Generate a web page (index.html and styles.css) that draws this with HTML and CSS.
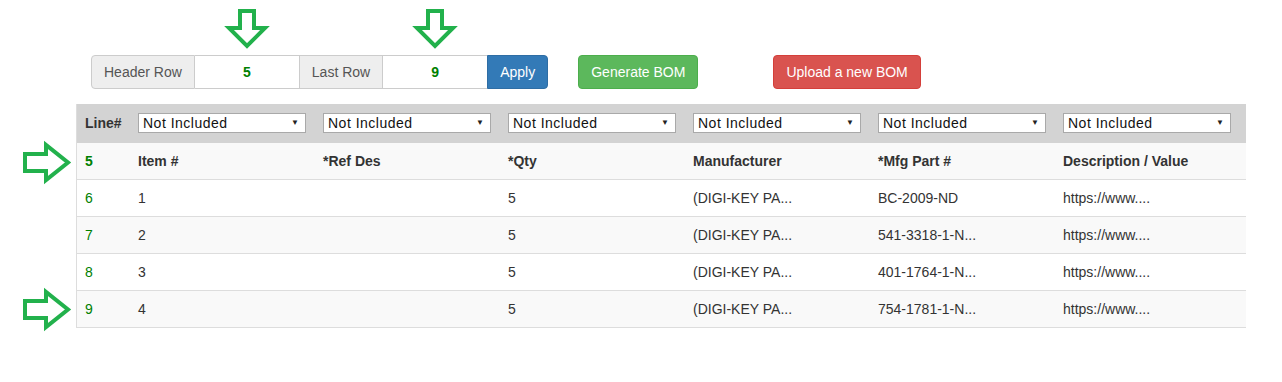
FILE: index.html
```html
<!DOCTYPE html>
<html lang="en">
<head>
    <meta charset="UTF-8">
    <meta name="viewport" content="width=device-width, initial-scale=1.0">
    <title>BOM Import</title>
    <link rel="stylesheet" href="styles.css">
</head>
<body>
    <div class="toolbar">
        <div class="input-group">
            <span class="addon">Header Row</span>
            <input class="row-input" type="text" value="5">
            <span class="addon">Last Row</span>
            <input class="row-input" type="text" value="9">
            <button class="btn btn-primary btn-apply">Apply</button>
        </div>
        <button class="btn btn-success btn-generate">Generate BOM</button>
        <button class="btn btn-danger btn-upload">Upload a new BOM</button>
    </div>

    <div class="bom-wrap">
        <table class="bom-table">
            <colgroup>
                <col class="col-line">
                <col class="col-field"><col class="col-field"><col class="col-field">
                <col class="col-field"><col class="col-field"><col>
            </colgroup>
            <thead>
                <tr class="map-row">
                    <th>Line#</th>
                    <th><div class="pick"><select><option>Not Included</option></select></div></th>
                    <th><div class="pick"><select><option>Not Included</option></select></div></th>
                    <th><div class="pick"><select><option>Not Included</option></select></div></th>
                    <th><div class="pick"><select><option>Not Included</option></select></div></th>
                    <th><div class="pick"><select><option>Not Included</option></select></div></th>
                    <th><div class="pick"><select><option>Not Included</option></select></div></th>
                </tr>
            </thead>
            <tbody>
                <tr class="header-row">
                    <td class="line">5</td>
                    <td>Item #</td>
                    <td>*Ref Des</td>
                    <td>*Qty</td>
                    <td>Manufacturer</td>
                    <td>*Mfg Part #</td>
                    <td>Description / Value</td>
                </tr>
                <tr>
                    <td class="line">6</td>
                    <td>1</td>
                    <td></td>
                    <td>5</td>
                    <td>(DIGI-KEY PA...</td>
                    <td>BC-2009-ND</td>
                    <td>https://www....</td>
                </tr>
                <tr class="alt">
                    <td class="line">7</td>
                    <td>2</td>
                    <td></td>
                    <td>5</td>
                    <td>(DIGI-KEY PA...</td>
                    <td>541-3318-1-N...</td>
                    <td>https://www....</td>
                </tr>
                <tr>
                    <td class="line">8</td>
                    <td>3</td>
                    <td></td>
                    <td>5</td>
                    <td>(DIGI-KEY PA...</td>
                    <td>401-1764-1-N...</td>
                    <td>https://www....</td>
                </tr>
                <tr class="alt">
                    <td class="line">9</td>
                    <td>4</td>
                    <td></td>
                    <td>5</td>
                    <td>(DIGI-KEY PA...</td>
                    <td>754-1781-1-N...</td>
                    <td>https://www....</td>
                </tr>
            </tbody>
        </table>
    </div>

    <!-- annotation arrows -->
    <svg class="arrow arrow-down arrow-header" width="40" height="41" viewBox="0 0 40 41">
        <path d="M13,2 H27 V19 H38 L20,37 L2,19 H13 Z"/>
    </svg>
    <svg class="arrow arrow-down arrow-last" width="40" height="41" viewBox="0 0 40 41">
        <path d="M13,2 H27 V19 H38 L20,37 L2,19 H13 Z"/>
    </svg>
    <svg class="arrow arrow-right arrow-first-row" width="50" height="40" viewBox="0 0 50 40">
        <path d="M2,11 H23 V2 L45,19.5 L23,37 V28 H2 Z"/>
    </svg>
    <svg class="arrow arrow-right arrow-last-row" width="50" height="40" viewBox="0 0 50 40">
        <path d="M2,11 H23 V2 L45,19.5 L23,37 V28 H2 Z"/>
    </svg>
</body>
</html>
```

FILE: styles.css
```css
body {
    margin: 0;
    font-family: "Liberation Sans", Arial, sans-serif;
    font-size: 14px;
    line-height: 20px;
    color: #333;
    background: #fff;
    position: relative;
    min-height: 382px;
}
.toolbar {
    display: flex;
    align-items: center;
    padding: 55px 0 0 91px;
}
.input-group {
    display: flex;
    height: 34px;
}
.addon {
    padding: 6px 12px;
    background-color: #eee;
    border: 1px solid #ccc;
    color: #555;
    white-space: nowrap;
}
.addon:first-child {
    border-radius: 4px 0 0 4px;
}
.addon + .row-input {
    border-left: none;
}
.row-input {
    width: 104px;
    box-sizing: border-box;
    height: 34px;
    border: 1px solid #ccc;
    border-right: none;
    text-align: center;
    font-family: inherit;
    font-size: 14px;
    font-weight: bold;
    color: #008000;
    padding: 6px 12px;
    outline: none;
}
.btn {
    font-family: inherit;
    font-size: 14px;
    line-height: 20px;
    padding: 6px 12px;
    height: 34px;
    border: 1px solid transparent;
    border-radius: 4px;
    color: #fff;
    cursor: pointer;
    white-space: nowrap;
}
.btn-primary {
    background-color: #337ab7;
    border-color: #2e6da4;
}
.btn-apply {
    border-radius: 0 4px 4px 0;
}
.btn-success {
    background-color: #5cb85c;
    border-color: #4cae4c;
}
.btn-danger {
    background-color: #d9534f;
    border-color: #d43f3a;
}
.btn-generate {
    margin-left: 30px;
}
.btn-upload {
    margin-left: 75px;
}
.bom-wrap {
    margin: 15px 0 0 76px;
    width: 1169px;
    border-left: 1px solid #ddd;
}
.bom-table {
    width: 100%;
    border-collapse: collapse;
    table-layout: fixed;
}
.col-line {
    width: 53px;
}
.col-field {
    width: 185px;
}
.bom-table th,
.bom-table td {
    text-align: left;
    padding: 8px;
    white-space: nowrap;
    overflow: hidden;
}
.map-row {
    background-color: #d3d3d3;
}
.map-row th {
    padding: 9px 8px 10px;
    font-weight: bold;
}
.pick {
    position: relative;
    width: 168px;
}
.pick select {
    display: block;
    width: 168px;
    height: 20px;
    box-sizing: border-box;
    border: 1px solid #a9a9a9;
    background: #fff;
    padding: 0 20px 0 4px;
    font-family: "Liberation Sans", Arial, sans-serif;
    font-size: 14px;
    letter-spacing: 0.5px;
    color: #111;
    -webkit-appearance: none;
    appearance: none;
    border-radius: 0;
}
.pick::after {
    content: "\25BC";
    position: absolute;
    right: 7px;
    top: 0;
    font-size: 8px;
    line-height: 20px;
    color: #222;
    pointer-events: none;
}
.bom-table td {
    border-top: 1px solid #ddd;
}
.bom-table tbody tr:first-child td {
    border-top: none;
}
.bom-table tbody tr:last-child td {
    border-bottom: 1px solid #ddd;
}
.header-row {
    background-color: #f9f9f9;
    font-weight: bold;
}
.alt {
    background-color: #f9f9f9;
}
.line {
    color: #008000;
}
.arrow {
    position: absolute;
    overflow: visible;
}
.arrow path {
    fill: #fff;
    stroke: #22b14c;
    stroke-width: 4;
    stroke-linejoin: miter;
}
.arrow-header {
    left: 227px;
    top: 9px;
}
.arrow-last {
    left: 415px;
    top: 9px;
}
.arrow-first-row {
    left: 23px;
    top: 143px;
}
.arrow-last-row {
    left: 23px;
    top: 290px;
}
```
